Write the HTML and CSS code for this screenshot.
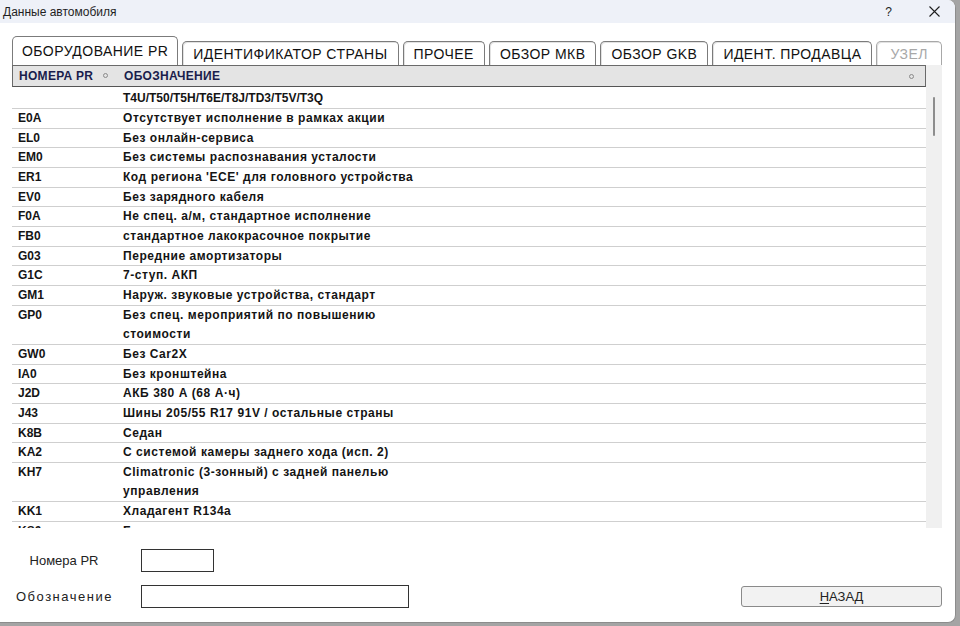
FILE: index.html
```html
<!DOCTYPE html>
<html lang="ru">
<head>
<meta charset="utf-8">
<title>Данные автомобиля</title>
<link rel="stylesheet" href="styles.css">
</head>
<body>
<div class="window">
  <div class="titlebar">
    <span class="title">Данные автомобиля</span>
    <div class="controls">
      <span class="help">?</span>
      <svg class="close" width="11" height="11" viewBox="0 0 11 11"><path d="M0.5 0.5 L10.5 10.5 M10.5 0.5 L0.5 10.5" stroke="#1f1f1f" stroke-width="1.1" fill="none"/></svg>
    </div>
  </div>

  <div class="tabs">
    <div class="tab active">ОБОРУДОВАНИЕ PR</div>
    <div class="tab">ИДЕНТИФИКАТОР СТРАНЫ</div>
    <div class="tab">ПРОЧЕЕ</div>
    <div class="tab">ОБЗОР МКВ</div>
    <div class="tab">ОБЗОР GKB</div>
    <div class="tab">ИДЕНТ. ПРОДАВЦА</div>
    <div class="tab disabled">УЗЕЛ</div>
  </div>

  <div class="panel">
    <div class="list">
      <div class="head">
        <div class="c1">НОМЕРА PR <i class="sort"></i></div>
        <div class="c2">ОБОЗНАЧЕНИЕ</div>
        <i class="sort end"></i>
      </div>
      <div class="rows">
        <div class="row first"><div class="c1"></div><div class="c2 latin">T4U/T50/T5H/T6E/T8J/TD3/T5V/T3Q</div></div>
        <div class="row"><div class="c1">E0A</div><div class="c2">Отсутствует исполнение в рамках акции</div></div>
        <div class="row"><div class="c1">EL0</div><div class="c2">Без онлайн-сервиса</div></div>
        <div class="row"><div class="c1">EM0</div><div class="c2">Без системы распознавания усталости</div></div>
        <div class="row"><div class="c1">ER1</div><div class="c2">Код региона 'ECE' для головного устройства</div></div>
        <div class="row"><div class="c1">EV0</div><div class="c2">Без зарядного кабеля</div></div>
        <div class="row"><div class="c1">F0A</div><div class="c2">Не спец. а/м, стандартное исполнение</div></div>
        <div class="row"><div class="c1">FB0</div><div class="c2">стандартное лакокрасочное покрытие</div></div>
        <div class="row"><div class="c1">G03</div><div class="c2">Передние амортизаторы</div></div>
        <div class="row"><div class="c1">G1C</div><div class="c2">7-ступ. АКП</div></div>
        <div class="row"><div class="c1">GM1</div><div class="c2">Наруж. звуковые устройства, стандарт</div></div>
        <div class="row"><div class="c1">GP0</div><div class="c2">Без спец. мероприятий по повышению стоимости</div></div>
        <div class="row"><div class="c1">GW0</div><div class="c2">Без Car2X</div></div>
        <div class="row"><div class="c1">IA0</div><div class="c2">Без кронштейна</div></div>
        <div class="row"><div class="c1">J2D</div><div class="c2">АКБ 380 А (68 А·ч)</div></div>
        <div class="row"><div class="c1">J43</div><div class="c2">Шины 205/55 R17 91V / остальные страны</div></div>
        <div class="row"><div class="c1">K8B</div><div class="c2">Седан</div></div>
        <div class="row"><div class="c1">KA2</div><div class="c2">С системой камеры заднего хода (исп. 2)</div></div>
        <div class="row"><div class="c1">KH7</div><div class="c2">Climatronic (3-зонный) с задней панелью управления</div></div>
        <div class="row"><div class="c1">KK1</div><div class="c2">Хладагент R134a</div></div>
        <div class="row"><div class="c1">KS0</div><div class="c2">Без проекционного дисплея</div></div>
        <div class="row"><div class="c1">KS1</div><div class="c2">Без системы</div></div>
      </div>
    </div>
    <div class="scroll"><div class="thumb"></div></div>
  </div>

  <div class="form">
    <div class="frow">
      <label class="lbl">Номера PR</label>
      <div class="input short"></div>
    </div>
    <div class="frow">
      <label class="lbl over">Обозначение</label>
      <div class="input long"></div>
      <button class="btn"><u>Н</u>АЗАД</button>
    </div>
  </div>
</div>
</body>
</html>
```

FILE: styles.css
```css
* { box-sizing: border-box; }
html, body { margin: 0; padding: 0; }
body {
  width: 960px;
  height: 626px;
  background: #a4a4a4;
  overflow: hidden;
  font-family: "Liberation Sans", Arial, sans-serif;
}
.window {
  width: 956px;
  height: 623px;
  background: #ffffff;
  border-right: 1px solid #8c8c8c;
  border-bottom: 1px solid #8c8c8c;
  border-radius: 0 8px 8px 0;
  overflow: hidden;
  display: flex;
  flex-direction: column;
}
.titlebar {
  height: 23px;
  flex: none;
  background: #eef1f8;
  display: flex;
  align-items: center;
  padding-left: 3px;
}
.title {
  font-size: 12px;
  color: #1f1f1f;
}
.controls {
  margin-left: auto;
  display: flex;
  align-items: center;
  padding-right: 15px;
}
.help {
  font-size: 12px;
  color: #1f1f1f;
  margin-right: 37px;
}
.close { display: block; }

.tabs {
  flex: none;
  margin-top: 13px;
  height: 29px;
  padding-left: 12px;
  display: flex;
  align-items: flex-end;
  gap: 4px;
}
.tab {
  height: 24px;
  padding: 0 10px;
  border: 1px solid #7b7b7b;
  border-bottom: none;
  border-radius: 5px 5px 0 0;
  background: #ffffff;
  box-shadow: inset 1px 1px 0 #e2e2e2;
  font-size: 14px;
  letter-spacing: 0.45px;
  line-height: 25px;
  color: #111;
  white-space: nowrap;
}
.tab.active {
  height: 29px;
  line-height: 29px;
  box-shadow: none;
  padding: 0 9px;
}
.tab.disabled {
  color: #a8a8a8;
  border-color: #a8a8a8;
  padding: 0 13px;
}

.panel {
  flex: none;
  height: 463px;
  margin-left: 12px;
  display: flex;
}
.list {
  width: 914px;
  display: flex;
  flex-direction: column;
  overflow: hidden;
}
.head {
  flex: none;
  height: 22px;
  background: #e4e4e4;
  border: 1px solid #6a6a6a;
  border-bottom-color: #555;
  display: flex;
  align-items: center;
  font-size: 12px;
  letter-spacing: 0.3px;
  font-weight: bold;
  color: #1a1d4c;
}
.c1 {
  width: 111px;
  flex: none;
  padding-left: 6px;
  white-space: nowrap;
}
.c2 {
  width: 300px;
  flex: none;
}
.sort {
  display: inline-block;
  width: 5px;
  height: 5px;
  border: 1px solid #8a8a8a;
  border-radius: 50%;
  margin-left: 6px;
  vertical-align: 2px;
}
.sort.end { margin-left: auto; margin-right: 11px; vertical-align: 0; }
.rows {
  flex: 1;
  overflow: hidden;
}
.row {
  display: flex;
  font-size: 12px;
  font-weight: bold;
  color: #141414;
  line-height: 19.65px;
  box-shadow: inset 0 -1px 0 #cfcfcf;
}
.row .c2 { letter-spacing: 0.55px; }
.row .c2.latin { letter-spacing: 0; }
.row.first { line-height: 22px; }
.scroll {
  width: 16px;
  flex: none;
  background: #f0f0f0;
  position: relative;
}
.thumb {
  position: absolute;
  left: 7px;
  top: 32px;
  width: 2px;
  height: 39px;
  background: #8d8d8d;
  border-radius: 1px;
}

.form {
  flex: none;
  padding-top: 21px;
  display: flex;
  flex-direction: column;
  gap: 13px;
}
.frow {
  display: flex;
  align-items: center;
  padding-right: 13px;
}
.lbl {
  width: 96px;
  margin-left: 16px;
  flex: none;
  overflow: hidden;
  white-space: nowrap;
  text-align: center;
  font-size: 13px;
  color: #222;
}
.lbl.over { letter-spacing: 1.5px; text-align: left; }
.input {
  margin-left: 29px;
  height: 23px;
  border: 1.5px solid #333;
  background: #fff;
}
.input.short { width: 73px; }
.input.long { width: 268px; height: 23px; }
.btn {
  margin-left: auto;
  width: 201px;
  height: 21px;
  border: 1px solid #8a8a8a;
  border-radius: 3px;
  background: #f2f2f2;
  font-family: "Liberation Sans", Arial, sans-serif;
  font-size: 13px;
  color: #222;
  padding: 0;
}
.btn u { text-underline-offset: 2px; }
```
